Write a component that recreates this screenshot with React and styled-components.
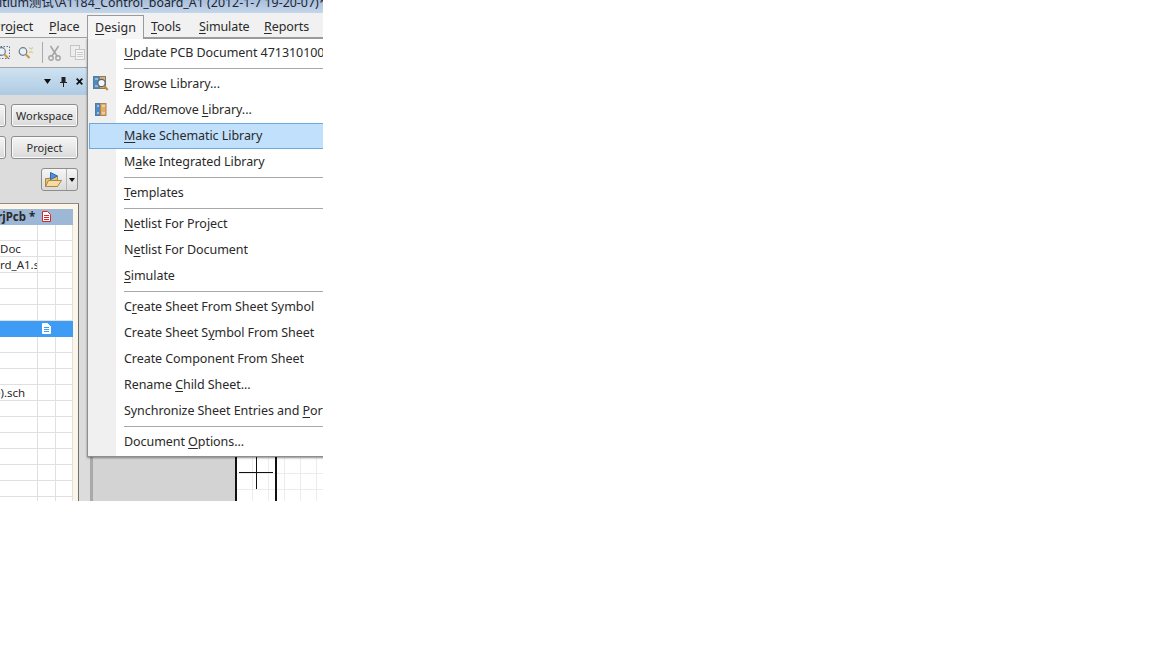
import styled, { createGlobalStyle } from 'styled-components';

const GlobalStyle = createGlobalStyle`
	html, body {
		margin: 0;
		padding: 0;
		background: #fff;
	}
	body {
		font-family: "Noto Sans", "Noto Sans CJK SC", sans-serif;
		font-size: 12.5px;
		color: #2a2a2a;
	}
	u {
		text-underline-offset: 2px;
	}
`;

const Window = styled.div`
	position: relative;
	width: 323px;
	height: 501px;
	overflow: hidden;
	display: flex;
	flex-direction: column;
	background: #f0f0ee;
`;

const TitleBar = styled.div`
	height: 13px;
	flex: none;
	background: linear-gradient(to bottom, #a9bfdc, #c3d6ea);
	white-space: nowrap;
	overflow: hidden;
	font-size: 12.4px;
	line-height: 6px;
	color: #1d2530;
	span {
		display: block;
		margin-left: -1px;
	}
`;

const MenuBar = styled.div`
	height: 25px;
	flex: none;
	display: flex;
	align-items: center;
	gap: 16px;
	background: #f1f1f1;
	border-bottom: 1px solid #a0a0a0;
	box-sizing: border-box;
	margin-left: -7px;
`;

const MenuName = styled.div`
	white-space: nowrap;
	padding-top: 2px;
	letter-spacing: -0.1px;
	width: ${(props) => props.$w}px;
`;

const Toolbar = styled.div`
	height: 30px;
	flex: none;
	display: flex;
	align-items: center;
	background: #ececec;
	border-bottom: 1px solid #a3a3a3;
	box-sizing: border-box;
`;

const ToolIcon = styled.svg`
	display: block;
	flex: none;
	margin-left: ${(props) => props.$ml || 0}px;
`;

const ToolDivider = styled.div`
	width: 1px;
	height: 21px;
	flex: none;
	background: #a9a9a9;
	margin-left: 8px;
`;

const Body = styled.div`
	flex: 1;
	display: flex;
	min-height: 0;
`;

const Panel = styled.div`
	width: 90px;
	flex: none;
	display: flex;
	flex-direction: column;
	background: #dcdcdc;
`;

const PanelHeader = styled.div`
	height: 27px;
	flex: none;
	display: flex;
	align-items: center;
	justify-content: flex-end;
	gap: 9px;
	padding-right: 7px;
	background: linear-gradient(to bottom, #cfe2f1, #aecbe3);
`;

const ButtonRow = styled.div`
	display: flex;
	justify-content: flex-end;
	gap: 5px;
	margin-top: ${(props) => props.$mt}px;
	padding-right: 12px;
`;

const SideButton = styled.button`
	height: 23px;
	width: ${(props) => props.$w}px;
	flex: none;
	box-sizing: border-box;
	padding: 0;
	border: 1px solid #8d8d8d;
	border-radius: 3px;
	background: linear-gradient(to bottom, #f6f6f6, #dadada);
	font: inherit;
	font-size: 11px;
	color: #2a2a2a;
	box-shadow: inset 0 0 0 1px #fbfbfb;
`;

const FolderButton = styled.div`
	width: 37px;
	height: 23px;
	display: flex;
	align-items: center;
	box-sizing: border-box;
	border: 1px solid #8d8d8d;
	border-radius: 3px;
	background: linear-gradient(to bottom, #f6f6f6, #dadada);
	padding-left: 2px;
`;

const Caret = styled.div`
	margin-left: 2px;
	height: 100%;
	flex: 1;
	border-left: 1px solid #b4b4b4;
	display: flex;
	align-items: center;
	justify-content: center;
	&::after {
		content: '';
		border: 3.5px solid transparent;
		border-top: 4px solid #111;
		border-bottom: 0;
	}
`;

const TableFrame = styled.div`
	width: 79px;
	flex: 1;
	min-height: 0;
	margin-top: 12px;
	padding: 5px 5px 0 0;
	box-sizing: border-box;
	background: #fbf6e8;
	border-top: 1px solid #8c8c8c;
	border-right: 1px solid #6f6f6f;
	overflow: hidden;
`;

const Row = styled.div`
	display: grid;
	grid-template-columns: 38px 18px 17px;
	height: 16px;
	box-sizing: border-box;
	background: ${(props) => (props.$head ? '#9db8d6' : props.$selected ? '#3f9cf5' : '#fff')};
	border-bottom: 1px solid ${(props) => (props.$head ? '#9db8d6' : props.$selected ? '#3f9cf5' : '#e0e0e0')};
	font-size: 11.5px;
	line-height: 15px;
	font-weight: ${(props) => (props.$head ? 700 : 400)};
`;

const NameCell = styled.div`
	white-space: nowrap;
	overflow: ${(props) => (props.$plain ? 'visible' : 'hidden')};
	border-right: 1px solid ${(props) => (props.$plain ? 'transparent' : '#e0e0e0')};
`;

const IconCell = styled.div`
	display: flex;
	align-items: center;
	justify-content: center;
	border-right: 1px solid ${(props) => (props.$plain ? 'transparent' : '#e0e0e0')};
`;

const Clip = styled.span`
	display: block;
	margin-left: ${(props) => props.$ml || 0}px;
`;

const SheetMargin = styled.div`
	width: 145px;
	flex: none;
	box-sizing: border-box;
	background: #d3d3d3;
	border-left: 3px solid #a9a9a9;
`;

const Sheet = styled.div`
	flex: 1;
	position: relative;
	border-left: 2px solid #111;
	background-color: #fff;
	background-image:
		linear-gradient(to right, #ececec 1px, transparent 1px),
		linear-gradient(to bottom, #ececec 1px, transparent 1px);
	background-size: 16px 16px;
	background-position: -1px 5px;
`;

const Wire = styled.div`
	width: 2px;
	height: 100%;
	margin-left: 38px;
	background: #111;
`;

const Cursor = styled.svg`
	position: absolute;
	left: 2px;
	bottom: 12px;
`;

const MenuTab = styled.div`
	position: absolute;
	left: 87px;
	top: 15px;
	width: 57px;
	height: 24px;
	box-sizing: border-box;
	z-index: 3;
	background: #f5f5f5;
	border: 1px solid #9a9a9a;
	border-bottom: none;
	text-align: center;
	line-height: 23px;
`;

const Menu = styled.div`
	position: absolute;
	left: 87px;
	top: 38px;
	width: 250px;
	height: 419px;
	box-sizing: border-box;
	z-index: 2;
	background: linear-gradient(to right, #f0f0f0 28px, #fff 28px);
	border-left: 1px solid #8e8e8e;
	border-top: 1px solid #9a9a9a;
	border-bottom: 1px solid #8e8e8e;
	padding-top: 1px;
	box-shadow: 0 1px 2px rgba(0, 0, 0, 0.4);
`;

const MenuRow = styled.div`
	height: 26px;
	box-sizing: border-box;
	position: relative;
	margin-left: 1px;
	white-space: nowrap;
	padding-left: 34px;
	line-height: 23px;
	letter-spacing: -0.06px;
	background: ${(props) => (props.$active ? '#c1e0fb' : 'transparent')};
	border: 1px solid ${(props) => (props.$active ? '#6ba9e0' : 'transparent')};
`;

const RowIcon = styled.svg`
	position: absolute;
	left: 2px;
	top: 3px;
`;

const Separator = styled.div`
	height: 5px;
	box-sizing: border-box;
	margin-left: 36px;
	padding-top: 2px;
	&::after {
		content: '';
		display: block;
		height: 1px;
		background: #a8a8a8;
	}
`;

const BrowseIcon = () => (
	<RowIcon width="17" height="17" viewBox="0 0 17 17">
		<rect x="1.5" y="1.5" width="6" height="12" fill="#4f8ac2" stroke="#5a7a9c" />
		<rect x="7.5" y="1.5" width="6" height="12" fill="#c9b48a" stroke="#8b7b57" />
		<path d="M3 4h3M3 11h3" stroke="#d7e6f3" />
		<circle cx="9.5" cy="8" r="3.7" fill="#f1f6fb" stroke="#5b646d" strokeWidth="1.2" />
		<path d="M12.2 11l3.5 4" stroke="#c08a3a" strokeWidth="2" />
	</RowIcon>
);

const BooksIcon = () => (
	<RowIcon width="17" height="17" viewBox="0 0 17 17">
		<rect x="3.5" y="2.5" width="5" height="12" fill="#4f8ac2" stroke="#5a7a9c" />
		<rect x="8.5" y="2.5" width="5.5" height="12" fill="#e3ad63" stroke="#a9874f" />
		<path d="M5 5h2M5 12h2M10 5h3M10 12h3" stroke="#f1f4f7" />
	</RowIcon>
);

const Magnifier = ({ cx, cy }) => (
	<>
		<circle cx={cx} cy={cy} r="3.8" fill="#e8f1f8" stroke="#6c7a88" strokeWidth="1.2" />
		<path d={`M${cx + 3} ${cy + 3}l3.5 3.5`} stroke="#c9953f" strokeWidth="2" />
	</>
);

const PageIcon = ({ outline, lines }) => (
	<svg width="9" height="11" viewBox="0 0 9 11" style={{ display: 'block' }}>
		<path d="M.5.5h5l3 3v7h-8z" fill="#fff" stroke={outline} />
		<path d="M2 4.5h5M2 6.5h5M2 8.5h5" stroke={lines} />
	</svg>
);

const menu = [
	{ label: <><u>U</u>pdate PCB Document 471310100</> },
	'sep',
	{ label: <><u>B</u>rowse Library...</>, icon: <BrowseIcon /> },
	{ label: <>Add/Remove <u>L</u>ibrary...</>, icon: <BooksIcon /> },
	{ label: <><u>M</u>ake Schematic Library</>, active: true },
	{ label: <>M<u>a</u>ke Integrated Library</> },
	'sep',
	{ label: <><u>T</u>emplates</> },
	'sep',
	{ label: <><u>N</u>etlist For Project</> },
	{ label: <>N<u>e</u>tlist For Document</> },
	{ label: <><u>S</u>imulate</> },
	'sep',
	{ label: <>C<u>r</u>eate Sheet From Sheet Symbol</> },
	{ label: <>Create Sheet S<u>y</u>mbol From Sheet</> },
	{ label: <>Create Component From Sheet</> },
	{ label: <>Rename <u>C</u>hild Sheet...</> },
	{ label: <>Synchronize Sheet Entries and <u>P</u>orts</> },
	'sep',
	{ label: <>Document <u>O</u>ptions...</> },
];

const rows = [
	{},
	{ name: 'Doc', ml: 0 },
	{ name: 'rd_A1.s', ml: 0 },
	{},
	{},
	{},
	{ selected: true },
	{},
	{},
	{},
	{ name: 'e).sch', ml: -6 },
	{},
	{},
	{},
	{},
	{},
	{},
	{},
];

const App = () => {
	return (
		<>
			<GlobalStyle />
			<Window>
				<TitleBar>
					<span>ltium测试\A1184_Control_board_A1 (2012-1-7 19-20-07)*</span>
				</TitleBar>
				<MenuBar>
					<MenuName $w={40}>
						Pr<u>o</u>ject
					</MenuName>
					<MenuName $w={30}>
						<u>P</u>lace
					</MenuName>
					<MenuName $w={40} />
					<MenuName $w={32}>
						<u>T</u>ools
					</MenuName>
					<MenuName $w={49}>
						<u>S</u>imulate
					</MenuName>
					<MenuName $w={46}>
						<u>R</u>eports
					</MenuName>
				</MenuBar>
				<Toolbar>
					<ToolIcon $ml={-3} width="13" height="15" viewBox="0 0 13 15">
						<rect x="0.5" y="1.5" width="12" height="12" fill="none" stroke="#5b6f9c" strokeDasharray="1.5 1.5" />
						<Magnifier cx={4.5} cy={6.5} />
					</ToolIcon>
					<ToolIcon $ml={8} width="16" height="15" viewBox="0 0 16 15">
						<Magnifier cx={5} cy={6.5} />
						<path d="M11 2.5l2 1.5 2-1.5M11 8l2-1.5 2 1.5" stroke="#d8cf8a" strokeWidth="1.2" fill="none" />
					</ToolIcon>
					<ToolDivider />
					<ToolIcon $ml={5} width="13" height="16" viewBox="0 0 13 16">
						<path d="M2.5 1l6.5 10M10.5 1L4 11" stroke="#a3a3a3" strokeWidth="1.5" fill="none" />
						<circle cx="3" cy="13" r="2.2" fill="none" stroke="#a3a3a3" strokeWidth="1.4" />
						<circle cx="10" cy="13" r="2.2" fill="none" stroke="#a3a3a3" strokeWidth="1.4" />
					</ToolIcon>
					<ToolIcon $ml={9} width="16" height="15" viewBox="0 0 16 15">
						<rect x="0.5" y="0.5" width="9" height="11" fill="#eeeeee" stroke="#c4c4c4" />
						<rect x="5.5" y="4.5" width="9" height="10" fill="#f4f4f4" stroke="#c4c4c4" />
						<path d="M7 7.5h6M7 9.5h6M7 11.5h6" stroke="#cdcdcd" />
					</ToolIcon>
				</Toolbar>
				<Body>
					<Panel>
						<PanelHeader>
							<svg width="7" height="5" viewBox="0 0 7 5">
								<path d="M0 0h7L3.5 5z" fill="#111" />
							</svg>
							<svg width="7" height="10" viewBox="0 0 7 10">
								<path d="M1.5 0h4v5H7v1H0V5h1.5zM3 6h1v4H3z" fill="#222" />
							</svg>
							<svg width="7" height="7" viewBox="0 0 7 7">
								<path d="M.7.7l5.6 5.6M6.3.7L.7 6.3" stroke="#111" strokeWidth="1.8" />
							</svg>
						</PanelHeader>
						<ButtonRow $mt={9}>
							<SideButton $w={10} />
							<SideButton $w={67}>Workspace</SideButton>
						</ButtonRow>
						<ButtonRow $mt={9}>
							<SideButton $w={10} />
							<SideButton $w={67}>Project</SideButton>
						</ButtonRow>
						<ButtonRow $mt={9}>
							<FolderButton>
								<svg width="20" height="18" viewBox="0 0 20 18">
									<path d="M1.5 7.5h4l1-2h7v10h-12z" fill="#e7c274" stroke="#a88748" />
									<path d="M1.5 15.5l3-6h13l-4 6z" fill="#f6dd9d" stroke="#a88748" />
									<path d="M6.5 1.5l7 3.5-7 3.5z" fill="#4d8fe0" stroke="#2f67b0" />
								</svg>
								<Caret />
							</FolderButton>
						</ButtonRow>
						<TableFrame>
							<Row $head>
								<NameCell $plain>
									<Clip $ml={-10}>PrjPcb *</Clip>
								</NameCell>
								<IconCell $plain>
									<PageIcon outline="#d9262a" lines="#d9262a" />
								</IconCell>
								<IconCell $plain />
							</Row>
							{rows.map((row, i) => (
								<Row key={i} $selected={row.selected}>
									<NameCell $plain={row.selected}>
										<Clip $ml={row.ml}>{row.name}</Clip>
									</NameCell>
									<IconCell $plain={row.selected}>
										{row.selected && <PageIcon outline="#ffffff" lines="#3f9cf5" />}
									</IconCell>
									<IconCell $plain={row.selected} />
								</Row>
							))}
						</TableFrame>
					</Panel>
					<SheetMargin />
					<Sheet>
						<Wire />
						<Cursor width="34" height="34" viewBox="0 0 34 34">
							<path d="M0 17.5h34M17.5 0v34" stroke="#111" strokeWidth="1" />
						</Cursor>
					</Sheet>
				</Body>
				<MenuTab>
					<u>D</u>esign
				</MenuTab>
				<Menu>
					{menu.map((item, i) =>
						item === 'sep' ? (
							<Separator key={i} />
						) : (
							<MenuRow key={i} $active={item.active}>
								{item.icon}
								{item.label}
							</MenuRow>
						)
					)}
				</Menu>
			</Window>
		</>
	);
};

export default App;
